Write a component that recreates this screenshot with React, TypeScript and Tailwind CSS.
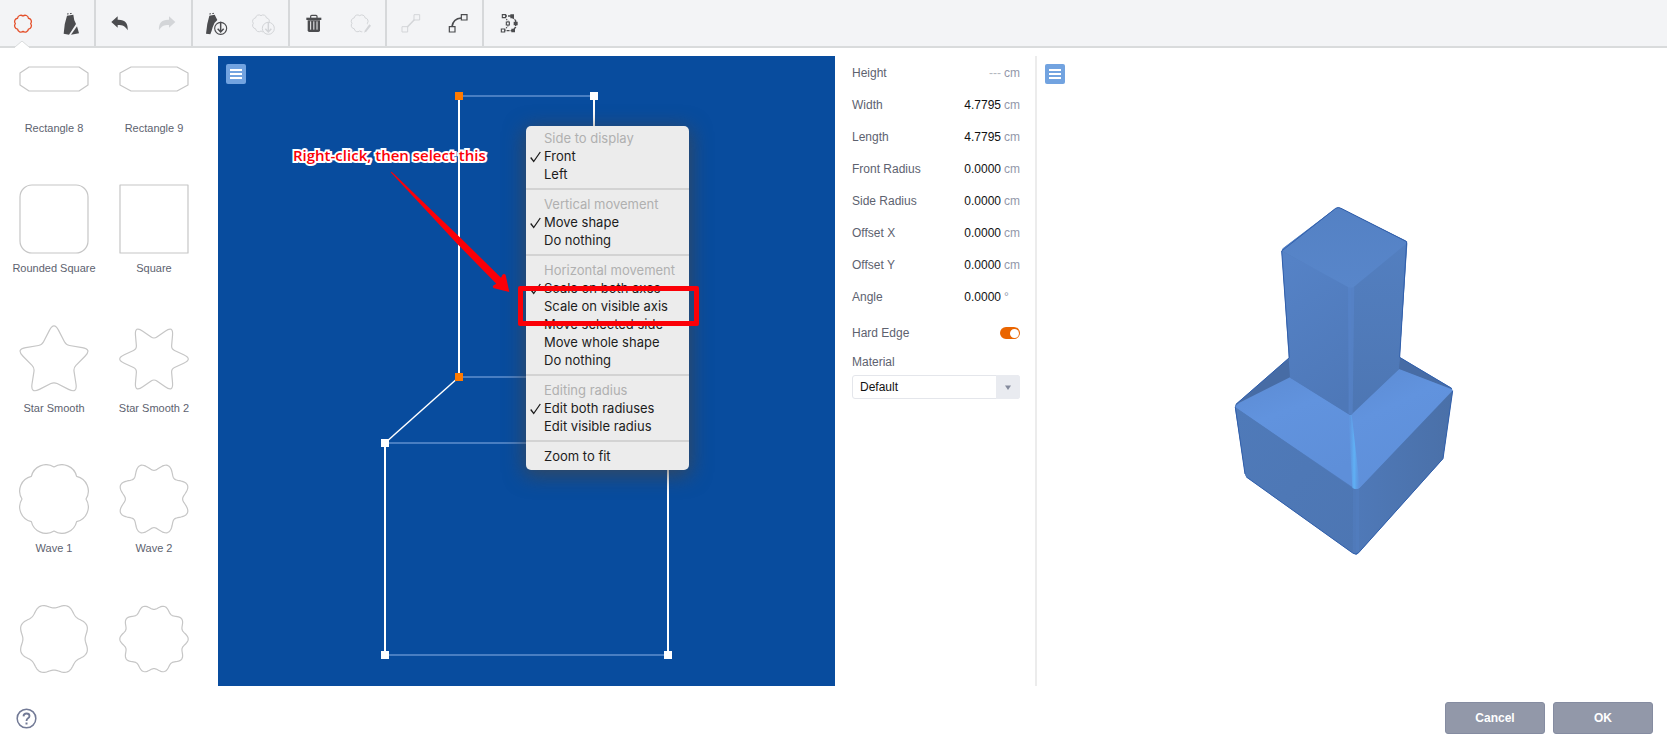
import React, { useState } from "react";
import type { ReactNode } from "react";

type Point = [number, number];

const polar = (r: number, deg: number): Point => {
  const a = (deg * Math.PI) / 180;
  return [r * Math.cos(a), r * Math.sin(a)];
};

const fmt = (p: Point) => `${p[0].toFixed(2)} ${p[1].toFixed(2)}`;

/* Closed sine wave wrapped round a circle; `phase` is the angle of the first crest. */
function wave(lobes: number, mean: number, amp: number, phase: number) {
  const pts: string[] = [];
  for (let d = 0; d < 360; d += 2) {
    const r = mean + amp * Math.cos((lobes * (d - phase) * Math.PI) / 180);
    pts.push(fmt(polar(r, d)));
  }
  return `M${pts.join("L")}Z`;
}

/* Circle of outward arcs that meet in notches. */
function scallop(lobes: number, notch: number, arc: number) {
  let d = `M${fmt(polar(notch, 0))}`;
  for (let i = 1; i <= lobes; i++) {
    d += `A${arc} ${arc} 0 0 1 ${fmt(polar(notch, (360 / lobes) * i))}`;
  }
  return d + "Z";
}

function star(n: number, outer: number, inner: number, start: number, cy: number) {
  const v: Point[] = [];
  for (let i = 0; i < n * 2; i++) {
    const p = polar(i % 2 ? inner : outer, start + (180 / n) * i);
    v.push([p[0], p[1] + cy]);
  }
  let d = "";
  v.forEach((p, i) => {
    const cut = i % 2 ? 3.5 : 10;
    const a = v[(i + v.length - 1) % v.length];
    const b = v[(i + 1) % v.length];
    const toward = (q: Point): Point => {
      const l = Math.hypot(q[0] - p[0], q[1] - p[1]);
      return [p[0] + ((q[0] - p[0]) * cut) / l, p[1] + ((q[1] - p[1]) * cut) / l];
    };
    d += `${i ? "L" : "M"}${fmt(toward(a))}Q${fmt(p)} ${fmt(toward(b))}`;
  });
  return d + "Z";
}

const SHAPES: { name: string; d: string; labelled: boolean }[] = [
  { name: "Rectangle 8", d: "M-34 -6L-25 -12H25L34 -6V6L25 12H-25L-34 6Z", labelled: true },
  { name: "Rectangle 9", d: "M-34 -6L-23 -12H23L34 -6V6L23 12H-23L-34 6Z", labelled: true },
  {
    name: "Rounded Square",
    d: "M-22 -34H22A12 12 0 0 1 34 -22V22A12 12 0 0 1 22 34H-22A12 12 0 0 1 -34 22V-22A12 12 0 0 1 -22 -34Z",
    labelled: true,
  },
  { name: "Square", d: "M-34 -34H34V34H-34Z", labelled: true },
  { name: "Star Smooth", d: star(5, 40, 20.5, -90, 2.5), labelled: true },
  { name: "Star Smooth 2", d: star(6, 38.8, 20, 0, 0), labelled: true },
  { name: "Wave 1", d: scallop(8, 32, 15), labelled: true },
  { name: "Wave 2", d: wave(8, 32.4, 3.8, 22.5), labelled: true },
  { name: "Wave 3", d: wave(8, 33.3, 2.2, 22.5), labelled: false },
  { name: "Wave 4", d: wave(10, 31.9, 2.3, 0), labelled: false },
];

function Glyph({ x, children }: { x: number; children: ReactNode }) {
  return (
    <svg width="32" height="32" viewBox={`${x - 48} 21 96 96`} fill="none" aria-hidden="true">
      {children}
    </svg>
  );
}

const DARK = "#4b4c4f";
const FAINT = "#d3d5d8";
const ROUND = scallop(8, 23, 10);

const TOOLS: { label: string; off?: boolean; active?: boolean; icon: ReactNode }[][] = [
  [
    {
      label: "Shapes",
      active: true,
      icon: (
        <Glyph x={70}>
          <path d={ROUND} transform="translate(67 71)" stroke="#e4502b" strokeWidth="4" strokeLinejoin="round" />
        </Glyph>
      ),
    },
    {
      label: "Profile",
      icon: (
        <Glyph x={211}>
          <path d="M199 47L218 44Q219 60 226 72L205 104L189 101Q190 72 199 47Z" fill={DARK} />
          <path d="M229 79L235 100L211 104Z" fill={DARK} />
          <path d="M199 42L216 40" stroke={DARK} strokeWidth="3" strokeDasharray="5 4" />
        </Glyph>
      ),
    },
  ],
  [
    {
      label: "Undo",
      icon: (
        <Glyph x={359}>
          <path d="M333 66L352 49V59C374 58 384 70 382 91C374 78 368 75 352 75V83Z" fill={DARK} />
        </Glyph>
      ),
    },
    {
      label: "Redo",
      off: true,
      icon: (
        <Glyph x={502}>
          <path d="M527 66L508 49V59C486 58 476 70 478 91C486 78 492 75 508 75V83Z" fill={FAINT} />
        </Glyph>
      ),
    },
  ],
  [
    {
      label: "Import profile",
      icon: (
        <Glyph x={650}>
          <path d="M627 47L643 44L651 60Q640 68 637 82Q634 94 630 103L617 101Q619 72 627 47Z" fill={DARK} />
          <path d="M627 42L641 40" stroke={DARK} strokeWidth="3" strokeDasharray="5 4" />
          <circle cx="661" cy="85" r="18" fill="#f3f4f6" stroke={DARK} strokeWidth="3.4" />
          <path d="M661 65V92M652 86L661 96L670 86" stroke={DARK} strokeWidth="4.4" />
        </Glyph>
      ),
    },
    {
      label: "Import shape",
      off: true,
      icon: (
        <Glyph x={793}>
          <path d={ROUND} transform="translate(784 70)" stroke={FAINT} strokeWidth="3" />
          <circle cx="806" cy="85" r="18" fill="#f3f4f6" stroke={FAINT} strokeWidth="3" />
          <path d="M806 65V92M797 86L806 96L815 86" stroke={FAINT} strokeWidth="4.4" />
        </Glyph>
      ),
    },
  ],
  [
    {
      label: "Delete",
      icon: (
        <Glyph x={101}>
          <path d="M78 53H123V60H78Z" fill={DARK} />
          <path d="M91 54V49Q91 46 94 46H107Q110 46 110 49V54" stroke={DARK} strokeWidth="3.6" />
          <path d="M82 61H119V91Q119 96 114 96H87Q82 96 82 91Z" fill={DARK} />
          <path d="M91 64V89M100.500 64V89M110 64V89" stroke="#f3f4f6" strokeWidth="3" />
        </Glyph>
      ),
    },
    {
      label: "Edit shape",
      off: true,
      icon: (
        <Glyph x={244}>
          <path d={ROUND} transform="translate(240 70)" stroke={FAINT} strokeWidth="3" />
          <path d="M252 98L274 71" stroke="#f3f4f6" strokeWidth="14" />
          <path d="M256 91L269 73L274 77L261 94L253 98Z" fill={FAINT} />
        </Glyph>
      ),
    },
  ],
  [
    {
      label: "Straight segment",
      off: true,
      icon: (
        <Glyph x={392}>
          <path d="M381 81L402 59" stroke={FAINT} strokeWidth="4.500" />
          <path d="M365 80H382V96H365ZM401 44H418V60H401Z" stroke={FAINT} strokeWidth="3" />
        </Glyph>
      ),
    },
    {
      label: "Curved segment",
      icon: (
        <Glyph x={535}>
          <path d="M517 80Q520 56 545 54" stroke={DARK} strokeWidth="5" />
          <path d="M509 80H526V96H509ZM545 44H562V60H545Z" fill="#f3f4f6" stroke={DARK} strokeWidth="3.6" />
        </Glyph>
      ),
    },
  ],
  [
    {
      label: "Snap points",
      icon: (
        <Glyph x={683}>
          <path d="M671 48H693L706 62V81L698 92H668" stroke={DARK} strokeWidth="4" strokeDasharray="9 3" />
          <path d="M678 57L684 65M684 76L675 88" stroke={DARK} strokeWidth="3.4" strokeDasharray="4 3" />
          <path d="M666 44H676V53H666ZM678 66H687V75H678ZM663 87H673V96H663Z" fill="#f3f4f6" stroke={DARK} strokeWidth="3.4" />
          <path d="M690 43H701V55H690ZM700 65H712V76H700ZM693 86H704V97H693Z" fill={DARK} />
        </Glyph>
      ),
    },
  ],
];

function Toolbar() {
  return (
    <header className="flex h-12 shrink-0 border-b-2 border-[#d9dbdc] bg-[#f3f4f6]">
      {TOOLS.map((group, i) => (
        <div
          key={i}
          className={
            i === 0
              ? "flex w-24 border-r-2 border-[#d6d8da]"
              : i === TOOLS.length - 1
                ? "flex w-[95px]"
                : "flex w-[97px] border-r-2 border-[#d6d8da]"
          }
        >
          {group.map((t) => (
            <button
              key={t.label}
              type="button"
              aria-label={t.label}
              disabled={t.off}
              className={
                group.length === 1
                  ? "flex w-1/2 items-center justify-center"
                  : "relative flex flex-1 items-center justify-center"
              }
            >
              {t.icon}
              {t.active && (
                <svg className="absolute -bottom-0.5 left-[15px]" width="14" height="7" viewBox="0 0 14 7" aria-hidden="true">
                  <path d="M0 6L7 0L14 6V7H0Z" fill="#fff" />
                  <path d="M0 6L7 0L14 6" fill="none" stroke="#d9dbdc" />
                </svg>
              )}
            </button>
          ))}
        </div>
      ))}
    </header>
  );
}

function ShapeList() {
  return (
    <aside className="min-h-0 overflow-hidden pt-px pl-1">
      <div className="grid w-[200px] grid-cols-2">
        {SHAPES.map((s) => (
          <button key={s.name} type="button" aria-label={s.name} className="flex h-[140px] flex-col items-center">
            <span className="flex h-[60px] items-center justify-center">
              <svg width="70" height="70" viewBox="-35 -35 70 70" className="shrink-0" aria-hidden="true">
                <path d={s.d} fill="none" stroke="#c6c6c6" strokeWidth="1.2" strokeLinejoin="round" />
              </svg>
            </span>
            {s.labelled && (
              <span className="mt-[11px] text-[11px] leading-4 whitespace-nowrap text-[#5d626f]">{s.name}</span>
            )}
          </button>
        ))}
      </div>
    </aside>
  );
}

function MenuButton({ label }: { label: string }) {
  return (
    <button
      type="button"
      aria-label={label}
      className="absolute top-2 left-2 flex size-5 flex-col items-center justify-center gap-0.5 rounded-xs bg-[#72a3e0]"
    >
      <span className="h-0.5 w-3 bg-white" />
      <span className="h-0.5 w-3 bg-white" />
      <span className="h-0.5 w-3 bg-white" />
    </button>
  );
}

const MENU: { title?: string; items: { text: string; checked?: boolean }[] }[] = [
  { title: "Side to display", items: [{ text: "Front", checked: true }, { text: "Left" }] },
  { title: "Vertical movement", items: [{ text: "Move shape", checked: true }, { text: "Do nothing" }] },
  {
    title: "Horizontal movement",
    items: [
      { text: "Scale on both axes", checked: true },
      { text: "Scale on visible axis" },
      { text: "Move selected side" },
      { text: "Move whole shape" },
      { text: "Do nothing" },
    ],
  },
  { title: "Editing radius", items: [{ text: "Edit both radiuses", checked: true }, { text: "Edit visible radius" }] },
  { items: [{ text: "Zoom to fit" }] },
];

function ContextMenu() {
  return (
    <div
      role="menu"
      className="absolute top-[70px] left-[308px] w-[163px] rounded-[5px] bg-[#ececec] pt-[3px] pb-[5px] font-['Inter',sans-serif] text-[13px] leading-[18px] text-[#1c1c1c] shadow-[0_4px_20px_2px_rgba(70,70,70,0.7)]"
    >
      {MENU.map((section, i) => (
        <div key={i} className={i === 0 ? "" : "mt-[5px] border-t-2 border-[#d3d3d3] pt-[5px]"}>
          {section.title && <div className="pl-[18px] text-[#b0b0b0]">{section.title}</div>}
          {section.items.map((item) => (
            <button
              key={item.text}
              type="button"
              role="menuitem"
              className="flex w-full items-center pl-1 text-left whitespace-nowrap"
            >
              <span className="flex w-3.5 shrink-0 pt-0.5">
                {item.checked && (
                  <svg width="11" height="12" viewBox="0 0 11 12" aria-hidden="true">
                    <path d="M0.700 6.500L3.700 10.500L10.300 1" fill="none" stroke="#1c1c1c" strokeWidth="1.300" />
                  </svg>
                )}
              </span>
              {item.text}
            </button>
          ))}
        </div>
      ))}
    </div>
  );
}

const HANDLES: { x: number; y: number; selected?: boolean }[] = [
  { x: 241, y: 40, selected: true },
  { x: 376, y: 40 },
  { x: 241, y: 321, selected: true },
  { x: 167, y: 387 },
  { x: 167, y: 599 },
  { x: 450, y: 599 },
];

function ProfileCanvas() {
  return (
    <section className="relative mt-2 overflow-hidden bg-[#084c9e]">
      <svg className="absolute top-0 left-0" width="617" height="630" viewBox="0 0 617 630" aria-hidden="true">
        <path
          d="M241 40H376M241 321H376M167 387H450M167 599H450"
          fill="none"
          stroke="#5f8fce"
          strokeWidth="1.500"
        />
        <path d="M241 40V321M167 387V599M376 40V321M450 387V599" fill="none" stroke="#fff" strokeWidth="2" />
        <path d="M241 321L167 387" fill="none" stroke="#fff" strokeWidth="1.500" />
        {HANDLES.map((h) => (
          <rect key={`${h.x}-${h.y}`} x={h.x - 4} y={h.y - 4} width="8" height="8" fill={h.selected ? "#ff7a00" : "#fff"} />
        ))}
      </svg>
      <MenuButton label="Profile view menu" />
      <ContextMenu />
      <div className="pointer-events-none absolute top-[230px] left-[300px] h-10 w-[181px] rounded-xs border-[5px] border-[#fb0007]" />
      <p className="absolute top-[88px] left-[75px] font-['Open_Sans',sans-serif] text-[15px] leading-[22px] font-semibold whitespace-nowrap text-[#fb0007] [-webkit-text-stroke:4px_#fff] [paint-order:stroke_fill]">
        Right-click, then select this
      </p>
      <svg className="absolute top-[114px] left-[171px]" width="124" height="126" viewBox="0 0 372 378" aria-hidden="true">
        <path
          d="M5 7L8 5L218 207L336 323L340 315Q345 309 350 315L361 366L315 355Q308 350 315 345L322 341L203 220Z"
          fill="#fb0007"
        />
      </svg>
    </section>
  );
}

const FIELDS = [
  { label: "Height", value: "---", unit: "cm" },
  { label: "Width", value: "4.7795", unit: "cm" },
  { label: "Length", value: "4.7795", unit: "cm" },
  { label: "Front Radius", value: "0.0000", unit: "cm" },
  { label: "Side Radius", value: "0.0000", unit: "cm" },
  { label: "Offset X", value: "0.0000", unit: "cm" },
  { label: "Offset Y", value: "0.0000", unit: "cm" },
  { label: "Angle", value: "0.0000", unit: "°" },
];

function Properties() {
  const [hard, setHard] = useState(true);
  return (
    <form className="mt-[9px] pr-[15px] pl-[17px] text-xs text-[#5d626f]">
      {FIELDS.map((f) => (
        <label key={f.label} className="flex h-8 items-center">
          <span className="flex-1">{f.label}</span>
          <input
            type="text"
            defaultValue={f.value}
            className={
              f.value === "---"
                ? "w-16 bg-transparent text-right text-[#b4b7c0] outline-none"
                : "w-16 bg-transparent text-right text-[#111] outline-none"
            }
          />
          <span className="ml-[3px] w-4 text-[#9398aa]">{f.unit}</span>
        </label>
      ))}
      <label className="mt-1 flex h-8 items-center justify-between">
        Hard Edge
        <input
          type="checkbox"
          role="switch"
          checked={hard}
          onChange={(e) => setHard(e.target.checked)}
          className="flex h-3 w-5 appearance-none items-center rounded-full bg-[#c4c7d0] px-0.5 before:size-2 before:rounded-full before:bg-white checked:justify-end checked:bg-[#ea6500] checked:px-px checked:before:size-[9px]"
        />
      </label>
      <label htmlFor="material" className="flex h-[26px] items-center">
        Material
      </label>
      <div className="relative">
        <select
          id="material"
          className="block h-6 w-full appearance-none rounded-[3px] border border-[#e4e6eb] bg-white pr-7 pl-[7px] text-[#111]"
        >
          <option>Default</option>
        </select>
        <span className="pointer-events-none absolute inset-y-0 right-0 flex w-6 items-center justify-center rounded-r-[3px] bg-[#e9ebf0]">
          <svg width="6" height="5" viewBox="0 0 6 5" aria-hidden="true">
            <path d="M0 0.500H6L3 5Z" fill="#858b9d" />
          </svg>
        </span>
      </div>
    </form>
  );
}

function Preview() {
  return (
    <section className="relative mt-2 flex items-center justify-center border-l-2 border-[#ececec]">
      <MenuButton label="Preview menu" />
      <svg width="270" height="380" viewBox="21 -27 810 1140" role="img" aria-label="Model">
        <defs>
          <linearGradient id="top" x1="0" y1="0" x2="0" y2="1">
            <stop offset="0" stopColor="#5481c4" />
            <stop offset="1" stopColor="#5886ca" />
          </linearGradient>
          <linearGradient id="towerL" x1="0.300" y1="0" x2="0.600" y2="1">
            <stop offset="0" stopColor="#5582c6" />
            <stop offset="1" stopColor="#4e78b8" />
          </linearGradient>
          <linearGradient id="towerR" x1="0" y1="0" x2="0" y2="1">
            <stop offset="0" stopColor="#537fc0" />
            <stop offset="1" stopColor="#4d76b3" />
          </linearGradient>
          <linearGradient id="slope" x1="0" y1="0" x2="0.400" y2="1">
            <stop offset="0" stopColor="#5c8bd3" />
            <stop offset="0.400" stopColor="#6193de" />
            <stop offset="1" stopColor="#5e8fd9" />
          </linearGradient>
          <linearGradient id="baseL" x1="0" y1="0" x2="1" y2="1">
            <stop offset="0" stopColor="#4f7ab9" />
            <stop offset="1" stopColor="#4d76b3" />
          </linearGradient>
          <linearGradient id="baseR" x1="0" y1="0" x2="1" y2="0">
            <stop offset="0" stopColor="#4f79b8" />
            <stop offset="1" stopColor="#4a70a8" />
          </linearGradient>
          <linearGradient id="shine" x1="0" y1="0" x2="1" y2="0">
            <stop offset="0" stopColor="#5fa0ea" stopOpacity="0" />
            <stop offset="0.500" stopColor="#5fb1f5" />
            <stop offset="1" stopColor="#5fa0ea" stopOpacity="0" />
          </linearGradient>
        </defs>
        <path
          d="M377 55Q385 50 393 55L586 151Q593 155 592 163L569 502L722 592Q728 597 728 605L699 806L446 1088Q437 1096 428 1089L109 861Q106 858 105 852L75 655Q73 645 80 640L238 503L215 186Q214 179 220 174Z"
          fill="#4f7aba"
        />
        <path d="M238 503L247 566L78 645Z" fill="#476ca5" />
        <path d="M569 502L726 598L566 538Z" fill="#476ca5" />
        <path d="M240 562L420 674L437 898L76 652Q78 645 88 638Z" fill="url(#slope)" />
        <path d="M567 537L725 598L727 602L450 893Q443 900 432 897L420 674Z" fill="url(#slope)" />
        <path d="M76 652L428 895Q434 899 440 899V1094Q433 1093 428 1089L109 861L105 852Z" fill="url(#baseL)" />
        <path d="M440 899Q447 897 452 892L727 604L699 806L446 1088Q443 1092 438 1094Z" fill="url(#baseR)" />
        <path d="M429 897Q438 901 447 896V1088Q437 1097 428 1089Z" fill="#5481c6" opacity="0.400" />
        <path d="M415 674H425L450 892Q440 901 427 894Z" fill="url(#shine)" />
        <path d="M215 183L424 294V674H418L240 563Z" fill="url(#towerL)" />
        <path d="M424 294L591 158L567 538L426 672Q424 675 420 674Z" fill="url(#towerR)" />
        <path d="M414 290H433L428 671Q421 677 416 671Z" fill="#5886cb" opacity="0.600" />
        <path d="M377 55Q385 50 393 55L590 155Q592 158 588 162L432 290Q424 296 414 291L218 184Q213 180 220 174Z" fill="url(#top)" />
        <path
          d="M105 852L76 652M238 503L215 183L377 55Q385 50 393 55L590 155L569 502M728 602L699 806L446 1088Q437 1096 428 1089L109 861M78 643L238 503M569 502L726 596"
          fill="none"
          stroke="#315fab"
          strokeWidth="3"
        />
      </svg>
    </section>
  );
}

function Footer() {
  return (
    <footer className="flex h-[58px] shrink-0 items-center gap-2 pr-3.5 pl-4">
      <button type="button" aria-label="Help" className="mt-1.5 mr-auto">
        <svg width="21" height="21" viewBox="0 0 63 63" fill="none" stroke="#727a96" aria-hidden="true">
          <circle cx="31.500" cy="31.500" r="28" strokeWidth="4.500" />
          <path d="M22.500 25Q23 16.500 31.500 16.500Q40.500 16.500 40.500 24Q40.500 28 36 31Q31.500 34 31.500 39" strokeWidth="5.500" />
          <path d="M28.500 43.500H34.500V49.500H28.500Z" fill="#727a96" stroke="none" />
        </svg>
      </button>
      {["Cancel", "OK"].map((t) => (
        <button
          key={t}
          type="button"
          className="mt-1.5 h-8 w-[100px] rounded-[3px] border border-[#858ca1] bg-[#9298a9] text-xs font-bold text-white"
        >
          {t}
        </button>
      ))}
    </footer>
  );
}

export default function App() {
  return (
    <div className="flex h-screen flex-col overflow-hidden bg-white font-['Liberation_Sans',Arial,sans-serif]">
      <Toolbar />
      <main className="grid min-h-0 flex-1 grid-cols-[218px_617fr_200px_632fr] grid-rows-[minmax(0,1fr)]">
        <ShapeList />
        <ProfileCanvas />
        <Properties />
        <Preview />
      </main>
      <Footer />
    </div>
  );
}
